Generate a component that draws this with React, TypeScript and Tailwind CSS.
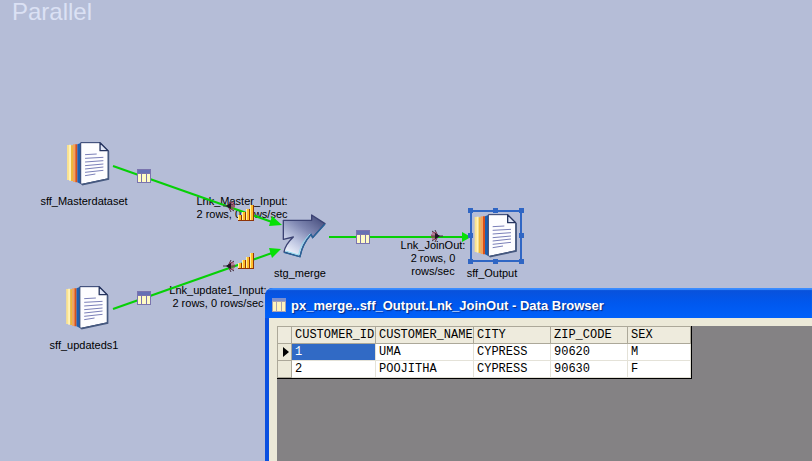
import React from "react";

type Row = { id: string; name: string; city: string; zip: string; sex: string };

const rows: Row[] = [
  { id: "1", name: "UMA", city: "CYPRESS", zip: "90620", sex: "M" },
  { id: "2", name: "POOJITHA", city: "CYPRESS", zip: "90630", sex: "F" },
];

const headers = ["CUSTOMER_ID", "CUSTOMER_NAME", "CITY", "ZIP_CODE", "SEX"];

function FileIcon() {
  return (
    <svg className="h-[46px] w-[44px]" viewBox="105 33 132 138" aria-hidden="true">
      <path d="M107 45H119V150H107Z" fill="#fbe38f" />
      <path d="M113 44H119V152H113Z" fill="#fff3b8" />
      <path d="M119 46H125V153H119Z" fill="#f0b838" />
      <path d="M125 43H133V156H125Z" fill="#f4a35c" />
      <path d="M132 43H138V157H132Z" fill="#d9501c" />
      <path d="M138 43L148 39V162L138 157Z" fill="#1d5fb0" />
      <path d="M148 38H206L231 63V146L152 163L148 161Z" fill="#fdfdff" stroke="#2c3d6b" strokeWidth="3" />
      <path d="M231 64V147L152 164" fill="none" stroke="#46597f" strokeWidth="5" />
      <path d="M206 38V62H230Z" fill="#dfe5f6" stroke="#26355f" strokeWidth="4" strokeLinejoin="round" />
      <path d="M161 74L196 72M161 85L216 82M161 96L216 92M161 107L216 102M161 117L216 111M161 127L216 121M161 137L192 132" stroke="#7a7fb8" strokeWidth="3" />
    </svg>
  );
}

function MergeIcon() {
  return (
    <svg className="h-[46px] w-[46px]" viewBox="0 0 138 138" aria-hidden="true">
      <defs>
        <linearGradient id="mergeFill" x1="0.9" y1="0" x2="0.2" y2="1">
          <stop offset="0" stopColor="#414878" />
          <stop offset="0.4" stopColor="#7f87b2" />
          <stop offset="0.7" stopColor="#bcc4e0" />
          <stop offset="1" stopColor="#f4f7ff" />
        </linearGradient>
      </defs>
      <path
        d="M7 22H92V6L132 32L95 74L90 64C76 80 62 102 57 131L9 117C12 98 22 86 37 72L7 79Z"
        fill="url(#mergeFill)" stroke="#3b4273" strokeWidth="4" strokeLinejoin="round"
      />
      <path d="M132 33L95 74L90 64C76 80 62 102 57 131L9 118" fill="none" stroke="#28659a" strokeWidth="4" />
      <path d="M88 62C71 79 58 99 53 126L14 114" fill="none" stroke="#8fdcf0" strokeWidth="3" />
    </svg>
  );
}

function SchemaGlyph({ x, y }: { x: number; y: number }) {
  return (
    <g transform={`translate(${x} ${y})`}>
      <path d="M0 0H14V14H0Z" fill="#7a74ae" />
      <path d="M1 1H13V4H1Z" fill="#6670b4" />
      <path d="M1 5H4V13H1ZM5 5H9V13H5ZM10 5H13V13H10Z" fill="#fffbc4" />
    </g>
  );
}

function BarsGlyph({ x, y }: { x: number; y: number }) {
  return (
    <g transform={`translate(${x} ${y})`}>
      <path d="M1 10H5V16H1ZM5 7H9V16H5ZM9 4H13V16H9ZM13 0H17V16H13Z" fill="#8e3408" />
      <path d="M1 10H4V15H1ZM5 7H8V15H5ZM9 4H12V15H9ZM13 0H16V15H13Z" fill="#ffbe28" />
      <path d="M1 10H2V15H1ZM5 7H6V15H5ZM9 4H10V15H9ZM13 0H14V15H13Z" fill="#fff2a0" />
    </g>
  );
}

function CollectGlyph({ x, y, flip }: { x: number; y: number; flip?: boolean }) {
  return (
    <g transform={`translate(${x} ${y})${flip ? " scale(-1 1)" : ""}`}>
      <path d="M-7 0H5M-3 0L4 -5M-3 0L4 5M-2 0L1 -6M-2 0L1 6" stroke="#46303f" strokeWidth="1" />
      <path d="M-1 -3L4 -3M-1 3L4 3M1 -1H5M1 1H5" stroke="#b03c58" strokeWidth="1" />
      <path d="M-4 0L1 -3V3Z" fill="#1e1626" />
    </g>
  );
}

function Links() {
  return (
    <svg className="pointer-events-none absolute left-0 top-0 h-[320px] w-[540px]" viewBox="0 0 540 320" aria-hidden="true">
      <g stroke="#06d006" strokeWidth="2">
        <path d="M113 166L272 222" />
        <path d="M113 309L272 253" />
        <path d="M329 237H464" />
      </g>
      <g fill="#06e006">
        <path d="M282 225L269 226L272 216Z" />
        <path d="M281 249L272 258L269 248Z" />
        <path d="M471 237L462 242V232Z" />
      </g>
      <SchemaGlyph x={137} y={169} />
      <SchemaGlyph x={137} y={291} />
      <SchemaGlyph x={356} y={230} />
      <CollectGlyph x={230} y={206} />
      <CollectGlyph x={230} y={266} />
      <CollectGlyph x={436} y={236} flip />
      <BarsGlyph x={237} y={205} />
      <BarsGlyph x={237} y={253} />
    </svg>
  );
}

function Handles() {
  const handle = "absolute size-[5px] bg-[#2f66c4]";
  return (
    <>
      <span className={`${handle} -left-[2px] -top-[2px]`} />
      <span className={`${handle} -top-[2px] left-[23px]`} />
      <span className={`${handle} -right-[2px] -top-[2px]`} />
      <span className={`${handle} -left-[2px] top-[23px]`} />
      <span className={`${handle} -right-[2px] top-[23px]`} />
      <span className={`${handle} -bottom-[2px] -left-[2px]`} />
      <span className={`${handle} -bottom-[2px] left-[23px]`} />
      <span className={`${handle} -bottom-[2px] -right-[2px]`} />
    </>
  );
}

function Stage({ place, label, selected, children }: { place: string; label: string; selected?: boolean; children: React.ReactNode }) {
  return (
    <figure className={`absolute flex -translate-x-1/2 flex-col items-center ${place}`}>
      <div className={`relative ml-2 flex size-[52px] items-center justify-center ${selected ? "outline-2 -outline-offset-2 outline-[#2f66c4]" : ""}`}>
        {children}
        {selected && <Handles />}
      </div>
      <figcaption className="mt-[5px] whitespace-nowrap leading-[13px]">{label}</figcaption>
    </figure>
  );
}

function LinkLabel({ place, lines }: { place: string; lines: string[] }) {
  return (
    <div className={`absolute -translate-x-1/2 whitespace-nowrap text-center leading-[13px] ${place}`}>
      {lines.map((line) => (
        <p key={line}>{line}</p>
      ))}
    </div>
  );
}

function DataBrowser() {
  const cell = "border-r border-b border-[#e4e2d8] py-0 pl-[3px] pr-0";
  return (
    <section className="absolute bottom-0 left-[265px] right-0 top-[288px] flex flex-col overflow-hidden rounded-tl-lg bg-[#0a50e0]">
      <header className="flex h-[30px] shrink-0 items-center gap-[5px] bg-linear-to-b from-[#0a50d8] via-[#0058ee] to-[#0060fa] pl-[7px] pt-1 shadow-[inset_0_2px_1px_#3a8cff]">
        <svg className="size-[14px] shrink-0" viewBox="0 0 14 14" aria-hidden="true">
          <path d="M0 0H14V14H0Z" fill="#a9a3b4" />
          <path d="M0 0H14V3H0Z" fill="#7b8fd0" />
          <path d="M1 4H4V13H1ZM5 4H9V13H5ZM10 4H13V13H10Z" fill="#fff3bc" />
        </svg>
        <h1 className="whitespace-nowrap pt-px font-['Liberation_Sans',Arial,sans-serif] text-[13px] font-bold text-white [text-shadow:1px_1px_1px_#0a2a80]">
          px_merge..sff_Output.Lnk_JoinOut - Data Browser
        </h1>
      </header>
      <div className="ml-1 flex grow flex-col bg-[#ece9d8] pl-2 pt-2">
        <div className="grow bg-[#848284]">
          <table className="w-[415px] table-fixed border-separate border-spacing-0 border-b border-r border-black bg-white font-['Liberation_Mono','Courier_New',monospace] text-xs leading-4 text-black">
            <colgroup>
              <col className="w-[15px]" />
              <col className="w-[84px]" />
              <col className="w-[98px]" />
              <col className="w-[77px]" />
              <col className="w-[77px]" />
              <col className="w-[63px]" />
            </colgroup>
            <thead>
              <tr className="h-[18px] bg-[#eeebdd]">
                <td className="border-b border-l border-r border-t border-[#aca899] p-0" />
                {headers.map((h) => (
                  <th key={h} scope="col" className="whitespace-nowrap border-b border-r border-t border-[#aca899] py-0 pl-[3px] pr-0 text-left font-normal">
                    {h}
                  </th>
                ))}
              </tr>
            </thead>
            <tbody>
              {rows.map((r, i) => (
                <tr key={r.id} className="h-[17px]">
                  <td className="border-b border-l border-r border-[#aca899] bg-[#ece9d8] p-0">
                    {i === 0 && (
                      <svg className="ml-[5px] h-[10px] w-[6px]" viewBox="0 0 6 10" aria-hidden="true">
                        <path d="M0 0L6 5L0 10Z" fill="#000" />
                      </svg>
                    )}
                  </td>
                  <td className={`${cell} ${i === 0 ? "bg-[#316ac5] text-white" : ""}`}>{r.id}</td>
                  <td className={cell}>{r.name}</td>
                  <td className={cell}>{r.city}</td>
                  <td className={cell}>{r.zip}</td>
                  <td className={cell}>{r.sex}</td>
                </tr>
              ))}
            </tbody>
          </table>
        </div>
      </div>
    </section>
  );
}

export default function App() {
  return (
    <main className="relative min-h-screen overflow-hidden bg-[#b5bdd7] font-['Liberation_Sans',Arial,sans-serif] text-[11px] text-black">
      <p className="pl-3 text-2xl leading-6 text-[#dbe1f4]">Parallel</p>
      <LinkLabel place="left-[242px] top-[195px]" lines={["Lnk_Master_Input:", "2 rows, 0 rows/sec"]} />
      <LinkLabel place="left-[218px] top-[284px]" lines={["Lnk_update1_Input:", "2 rows, 0 rows/sec"]} />
      <LinkLabel place="left-[433px] top-[239px]" lines={["Lnk_JoinOut:", "2 rows, 0", "rows/sec"]} />
      <Links />
      <Stage place="left-[84px] top-[138px]" label="sff_Masterdataset">
        <FileIcon />
      </Stage>
      <Stage place="left-[84px] top-[282px]" label="sff_updateds1">
        <FileIcon />
      </Stage>
      <Stage place="left-[300px] top-[210px]" label="stg_merge">
        <MergeIcon />
      </Stage>
      <Stage place="left-[492px] top-[210px]" label="sff_Output" selected>
        <FileIcon />
      </Stage>
      <DataBrowser />
    </main>
  );
}
